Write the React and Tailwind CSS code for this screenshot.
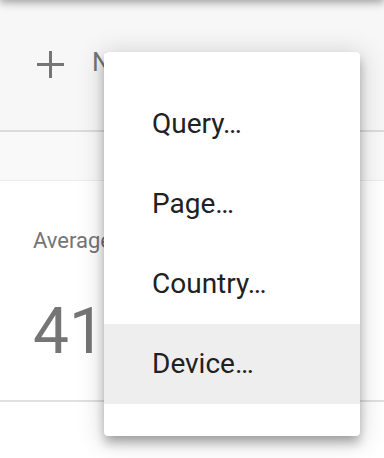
export default function App() {
  const items = ['Query…', 'Page…', 'Country…', 'Device…']
  return (
    <div className="relative w-[384px] h-[458px] overflow-hidden bg-white font-['Roboto',sans-serif]">
      <div className="-mt-[20px] h-[20px] bg-white shadow-[0_2px_10px_rgba(0,0,0,0.4)] relative z-10" />
      <div className="h-[130px] bg-[#f7f7f7] flex items-start pt-[50px] pl-[36px] gap-[27px] text-[#757575]">
        <svg width="29" height="29" viewBox="0 0 29 29">
          <path d="M14.5 1v27M1 14.5h27" stroke="#757575" strokeWidth="3" />
        </svg>
        <span className="text-[26px] leading-[30px] -mt-[3px]">NEW</span>
      </div>
      <div className="h-[2px] bg-[#dcdcdc]" />
      <div className="h-[49px] bg-[#f9f9f9] border-b border-[#ececec]" />
      <div className="bg-white h-[221px] border-b-2 border-[#e0e0e0] pl-[33px] pt-[47px] text-[#757575]">
        <div className="text-[22px] leading-[26px]">Average position</div>
        <div className="text-[64px] leading-[72px] mt-[42px]">41.2</div>
      </div>
      <div className="absolute left-[104px] top-[52px] w-[256px] h-[384px] rounded-[4px] bg-white py-[32px] shadow-[0_8px_10px_1px_rgba(0,0,0,0.14),0_3px_24px_4px_rgba(0,0,0,0.14),0_6px_10px_-4px_rgba(0,0,0,0.25)] z-20">
        {items.map((t, i) => (
          <div
            key={t}
            className={`h-[80px] flex items-center pl-[48px] text-[28px] text-[#212121] ${i === 3 ? 'bg-[#eeeeee]' : ''}`}
          >
            {t}
          </div>
        ))}
      </div>
    </div>
  )
}
